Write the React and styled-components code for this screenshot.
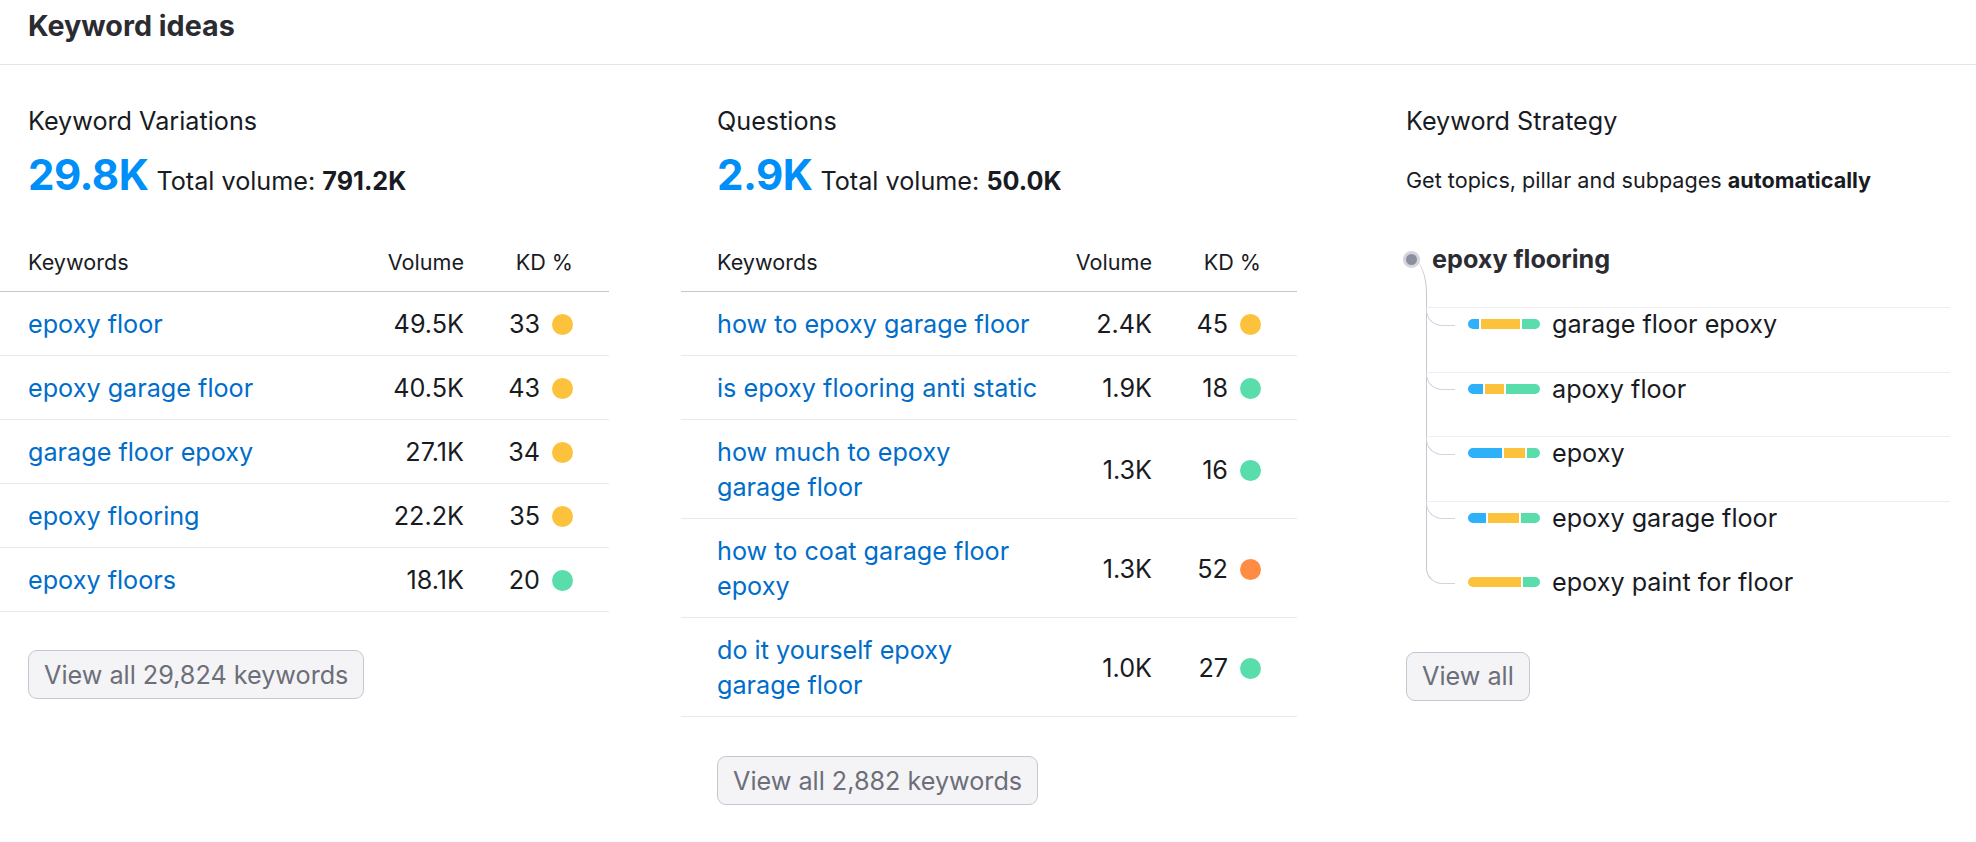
import React from 'react';
import styled, {createGlobalStyle} from 'styled-components';

const GlobalStyle = createGlobalStyle`
  html, body {
    margin: 0;
    padding: 0;
    background: #fff;
  }
  body {
    font-family: Inter, "Noto Sans", Arial, sans-serif;
    color: #191b23;
  }
  * {
    box-sizing: border-box;
  }
`;

const KD_COLORS = {
  easy: '#59ddaa',
  mid: '#fdc23c',
  hard: '#ff8c43',
};

const BAR_COLORS = ['#2eb1f9', '#fdc23c', '#59ddaa'];

const Page = styled.div`
  width: 1976px;
  height: 842px;
  overflow: hidden;
  background: #fff;
`;

const Header = styled.header`
  height: 65px;
  padding: 0 28px 12px;
  display: flex;
  align-items: center;
  border-bottom: 1px solid #e3e4ea;
`;

const PageTitle = styled.h1`
  margin: 0;
  font-size: 28.7px;
  line-height: 34px;
  font-weight: 700;
  color: #2b2c32;
`;

const Body = styled.main`
  display: grid;
  grid-template-columns: 609px 616px 1fr;
  column-gap: 72px;
  padding-top: 39.5px;
`;

const Column = styled.section`
  display: flex;
  flex-direction: column;
  align-items: flex-start;
  padding-right: ${p => p.$pr || 0}px;
`;

const BlockTitle = styled.h2`
  margin: 0;
  padding-left: ${p => p.$inset}px;
  font-size: 25.2px;
  line-height: 32px;
  font-weight: 400;
  color: #191b23;
`;

const Stats = styled.div`
  display: flex;
  align-items: baseline;
  margin-top: 13.5px;
  padding-left: ${p => p.$inset}px;
`;

const BigNum = styled.span`
  font-size: 42px;
  line-height: 50px;
  font-weight: 700;
  color: #008ff8;
  letter-spacing: -0.5px;
`;

const StatText = styled.span`
  margin-left: 8px;
  font-size: 25.2px;
  line-height: 32px;

  & b {
    font-weight: 700;
  }
`;

const Table = styled.div`
  width: 100%;
  margin-top: 48px;
`;

const HeadRow = styled.div`
  display: grid;
  grid-template-columns: minmax(0, 1fr) ${p => p.$vol}px 109px;
  padding: 0 36px 15px ${p => p.$inset}px;
  border-bottom: 1px solid #c4c7cf;
  font-size: 21.6px;
  line-height: 28px;
  color: #191b23;
`;

const Row = styled.div`
  display: grid;
  grid-template-columns: minmax(0, 1fr) ${p => p.$vol}px 109px;
  align-items: center;
  padding: 15px 36px 13px ${p => p.$inset}px;
  border-bottom: 1px solid #e8e9ee;
  font-size: 25.2px;
  line-height: 35px;
`;

const Right = styled.div`
  text-align: right;
`;

const KeywordLink = styled.a`
  color: #006dca;
  text-decoration: none;
  white-space: pre-line;
  cursor: pointer;
`;

const KdCell = styled.div`
  display: flex;
  justify-content: flex-end;
  align-items: center;
  gap: 12px;
`;

const Dot = styled.span`
  width: 21px;
  height: 21px;
  border-radius: 50%;
  background: ${p => p.$color};
  flex-shrink: 0;
`;

const Button = styled.button`
  margin-top: ${p => p.$mt}px;
  margin-left: ${p => p.$inset}px;
  height: 49px;
  padding: 0 15px;
  border: 1px solid #c4c7cf;
  border-radius: 9px;
  background: #f4f4f6;
  color: #6c6e79;
  font-family: inherit;
  font-size: 25.2px;
  line-height: 32px;
  cursor: pointer;
`;

const Subtitle = styled.p`
  margin: 29px 0 0;
  padding-left: ${p => p.$inset}px;
  font-size: 21.6px;
  line-height: 28px;

  & b {
    font-weight: 700;
  }
`;

const Tree = styled.div`
  align-self: stretch;
  margin: 49.5px 0 0 34px;
`;

const RootRow = styled.div`
  position: relative;
  display: flex;
  align-items: center;
  gap: 12px;
  height: 33px;
  margin-bottom: 31px;

  &::after {
    content: '';
    position: absolute;
    left: 8.5px;
    top: 16.5px;
    width: 14.5px;
    height: 34px;
    border-right: 1.5px solid #c4c7cf;
    border-top-right-radius: 14px 34px;
  }
`;

const RootDot = styled.span`
  position: relative;
  z-index: 1;
  width: 17px;
  height: 17px;
  border-radius: 50%;
  background: #8b8f9e;
  border: 3px solid #d3d5dc;
`;

const RootLabel = styled.span`
  font-size: 25.2px;
  line-height: 33px;
  font-weight: 700;
  color: #2b2c32;
`;

const ChildList = styled.div`
  position: relative;
  margin-left: 24px;

  &::before {
    content: '';
    position: absolute;
    left: -1.5px;
    top: -14px;
    bottom: 64.5px;
    width: 1.5px;
    background: #c4c7cf;
  }
`;

const ChildRow = styled.div`
  position: relative;
  height: 64.5px;
  border-top: 1px solid ${p => (p.$last ? 'transparent' : '#eeeff2')};

  &::before {
    content: '';
    position: absolute;
    left: -1.5px;
    top: -1px;
    width: 28.5px;
    height: 17.5px;
    border-left: ${p => (p.$last ? '1.5px solid #c4c7cf' : '1px solid #d3d5db')};
    border-bottom: 1px solid #d3d5db;
    border-bottom-left-radius: 16px;
  }
`;

const ChildLine = styled.div`
  display: flex;
  align-items: center;
  height: 32px;
  padding-left: 41px;
`;

const Bar = styled.div`
  display: flex;
  gap: 2px;
  width: 72px;
  height: 10px;
  border-radius: 5px;
  overflow: hidden;
  flex-shrink: 0;
`;

const Segment = styled.span`
  flex: ${p => p.$w} 0 0;
  background: ${p => p.$color};
`;

const ChildText = styled.span`
  margin-left: 12px;
  font-size: 25.2px;
  line-height: 32px;
  color: #191b23;
`;

const variations = [
  {kw: 'epoxy floor', vol: '49.5K', kd: 33, level: 'mid'},
  {kw: 'epoxy garage floor', vol: '40.5K', kd: 43, level: 'mid'},
  {kw: 'garage floor epoxy', vol: '27.1K', kd: 34, level: 'mid'},
  {kw: 'epoxy flooring', vol: '22.2K', kd: 35, level: 'mid'},
  {kw: 'epoxy floors', vol: '18.1K', kd: 20, level: 'easy'},
];

const questions = [
  {kw: 'how to epoxy garage floor', vol: '2.4K', kd: 45, level: 'mid'},
  {kw: 'is epoxy flooring anti static', vol: '1.9K', kd: 18, level: 'easy'},
  {kw: 'how much to epoxy\ngarage floor', vol: '1.3K', kd: 16, level: 'easy'},
  {kw: 'how to coat garage floor\nepoxy', vol: '1.3K', kd: 52, level: 'hard'},
  {kw: 'do it yourself epoxy\ngarage floor', vol: '1.0K', kd: 27, level: 'easy'},
];

const strategy = [
  {kw: 'garage floor epoxy', parts: [11, 39, 18]},
  {kw: 'apoxy floor', parts: [15, 19, 34]},
  {kw: 'epoxy', parts: [34, 21, 13]},
  {kw: 'epoxy garage floor', parts: [18, 31, 19]},
  {kw: 'epoxy paint for floor', parts: [0, 53, 17]},
];

const KeywordTable = ({rows, inset, vol}) => (
  <Table>
    <HeadRow $inset={inset} $vol={vol}>
      <div>Keywords</div>
      <Right>Volume</Right>
      <Right>KD %</Right>
    </HeadRow>
    {rows.map(r => (
      <Row key={r.kw} $inset={inset} $vol={vol}>
        <div>
          <KeywordLink>{r.kw}</KeywordLink>
        </div>
        <Right>{r.vol}</Right>
        <KdCell>
          {r.kd}
          <Dot $color={KD_COLORS[r.level]} />
        </KdCell>
      </Row>
    ))}
  </Table>
);

const Block = ({title, count, total, rows, inset, vol, button, btnTop}) => (
  <Column>
    <BlockTitle $inset={inset}>{title}</BlockTitle>
    <Stats $inset={inset}>
      <BigNum>{count}</BigNum>
      <StatText>
        Total volume: <b>{total}</b>
      </StatText>
    </Stats>
    <KeywordTable rows={rows} inset={inset} vol={vol} />
    <Button $mt={btnTop} $inset={inset}>{button}</Button>
  </Column>
);

const App = () => (
  <Page>
    <GlobalStyle />
    <Header>
      <PageTitle>Keyword ideas</PageTitle>
    </Header>
    <Body>
      <Block
        title="Keyword Variations"
        count="29.8K"
        total="791.2K"
        rows={variations}
        inset={28}
        vol={120}
        button="View all 29,824 keywords"
        btnTop={38}
      />
      <Block
        title="Questions"
        count="2.9K"
        total="50.0K"
        rows={questions}
        inset={36}
        vol={110}
        button="View all 2,882 keywords"
        btnTop={39}
      />
      <Column $pr={26}>
        <BlockTitle $inset={37}>Keyword Strategy</BlockTitle>
        <Subtitle $inset={37}>
          Get topics, pillar and subpages <b>automatically</b>
        </Subtitle>
        <Tree>
          <RootRow>
            <RootDot />
            <RootLabel>epoxy flooring</RootLabel>
          </RootRow>
          <ChildList>
            {strategy.map((s, i) => (
              <ChildRow key={s.kw} $last={i === strategy.length - 1}>
                <ChildLine>
                  <Bar>
                    {s.parts.map((w, j) =>
                      w > 0 ? <Segment key={j} $w={w} $color={BAR_COLORS[j]} /> : null
                    )}
                  </Bar>
                  <ChildText>{s.kw}</ChildText>
                </ChildLine>
              </ChildRow>
            ))}
          </ChildList>
        </Tree>
        <Button $mt={22} $inset={37}>View all</Button>
      </Column>
    </Body>
  </Page>
);

export default App;
